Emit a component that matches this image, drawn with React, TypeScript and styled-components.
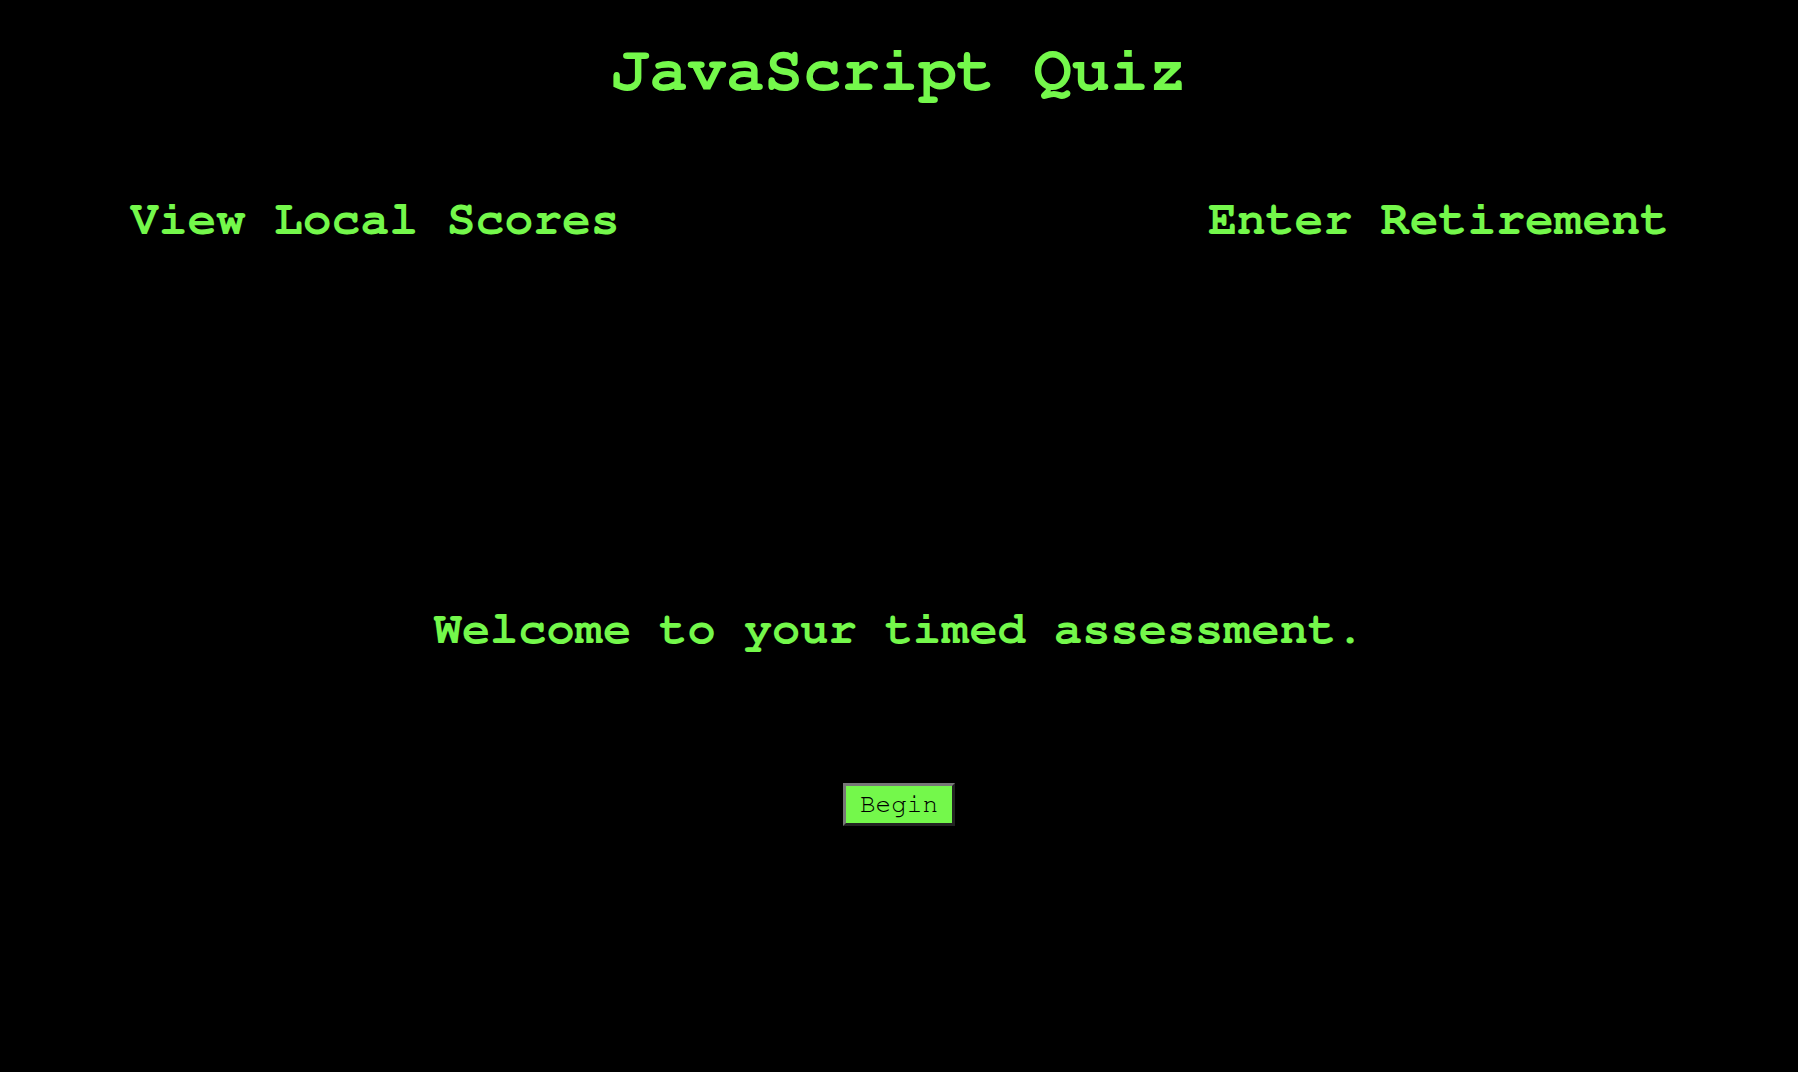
import styled, { createGlobalStyle } from 'styled-components'

const mono = `"Nimbus Mono PS", "Nimbus Mono L", "FreeMono", Courier, "Liberation Mono", "Courier New", monospace`

const GlobalStyle = createGlobalStyle`
    *{
        margin: 0px;
        padding: 0px;
        box-sizing: border-box;
    }
    html, body{
        background-color: black;
        min-height: 100vh;
    }
    body{
        font-family: ${mono};
        color: #74f84b;
    }
`

const Header = styled.header`
    display: flex;
    flex-direction: column;
    align-items: center;
    padding-top: 35px;
    h1{
        font-size: 64px;
        font-weight: bold;
        line-height: 72px;
    }
`

const Nav = styled.nav`
    display: flex;
    justify-content: space-between;
    padding: 86px 129px 0 130px;
`

const NavLink = styled.a`
    font-size: 48px;
    font-weight: bold;
    line-height: 54px;
    color: #74f84b;
    text-decoration: none;
    cursor: pointer;
`

const Main = styled.main`
    display: flex;
    flex-direction: column;
    align-items: center;
    padding-top: 355px;
`

const Welcome = styled.h2`
    font-size: 47px;
    font-weight: bold;
    line-height: 53px;
    text-align: center;
`

const Button = styled.button`
    margin-top: 128px;
    font-family: ${mono};
    font-size: 26px;
    line-height: 31px;
    padding: 3px 14px;
    color: black;
    background-color: #74f84b;
    border: 3px outset #777;
    cursor: pointer;
`

const App: React.FC = () => {
    return (
        <>
            <GlobalStyle />
            <Header>
                <h1>JavaScript Quiz</h1>
            </Header>
            <Nav>
                <NavLink>View Local Scores</NavLink>
                <NavLink>Enter Retirement</NavLink>
            </Nav>
            <Main>
                <Welcome>Welcome to your timed assessment.</Welcome>
                <Button>Begin</Button>
            </Main>
        </>
    )
}

export default App
